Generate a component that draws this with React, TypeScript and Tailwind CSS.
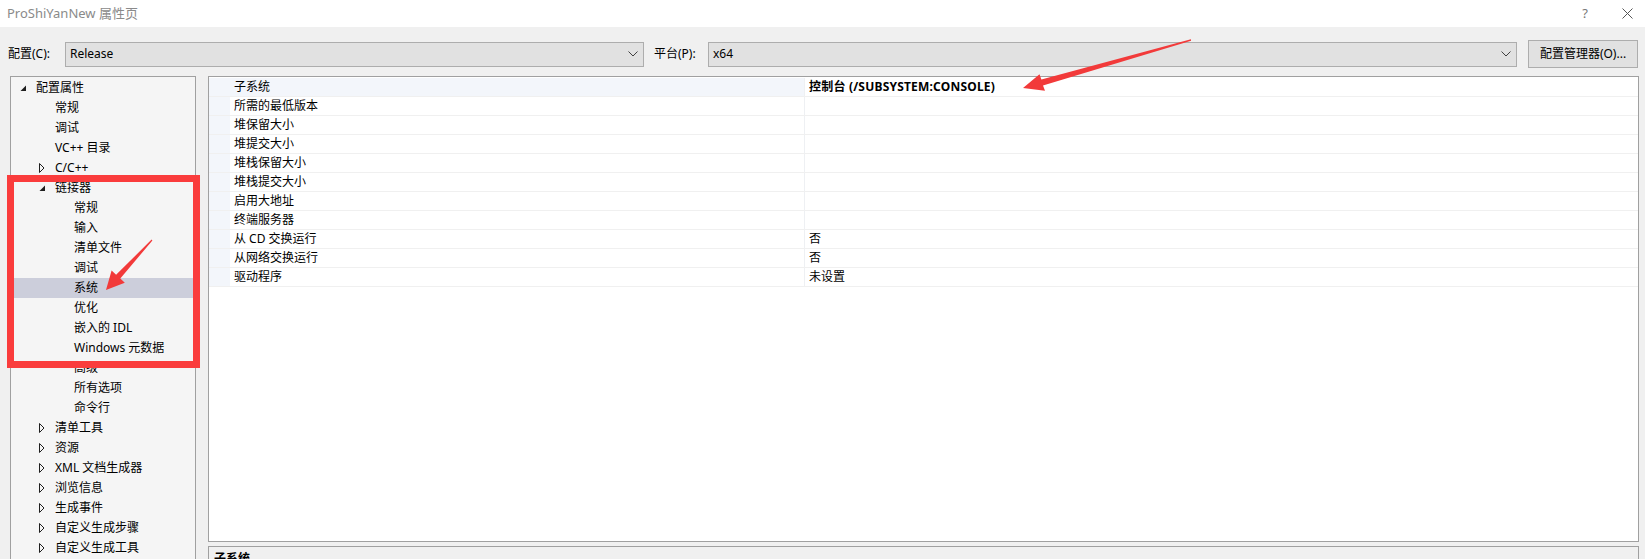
import React from "react";

type TreeItem = {
  label: string;
  level: 0 | 1 | 2;
  icon?: "open" | "closed";
  selected?: boolean;
};

const TREE: TreeItem[] = [
  { label: "配置属性", level: 0, icon: "open" },
  { label: "常规", level: 1 },
  { label: "调试", level: 1 },
  { label: "VC++ 目录", level: 1 },
  { label: "C/C++", level: 1, icon: "closed" },
  { label: "链接器", level: 1, icon: "open" },
  { label: "常规", level: 2 },
  { label: "输入", level: 2 },
  { label: "清单文件", level: 2 },
  { label: "调试", level: 2 },
  { label: "系统", level: 2, selected: true },
  { label: "优化", level: 2 },
  { label: "嵌入的 IDL", level: 2 },
  { label: "Windows 元数据", level: 2 },
  { label: "高级", level: 2 },
  { label: "所有选项", level: 2 },
  { label: "命令行", level: 2 },
  { label: "清单工具", level: 1, icon: "closed" },
  { label: "资源", level: 1, icon: "closed" },
  { label: "XML 文档生成器", level: 1, icon: "closed" },
  { label: "浏览信息", level: 1, icon: "closed" },
  { label: "生成事件", level: 1, icon: "closed" },
  { label: "自定义生成步骤", level: 1, icon: "closed" },
  { label: "自定义生成工具", level: 1, icon: "closed" },
];

const LEVEL_PAD: Record<number, string> = {
  0: "pl-[9px]",
  1: "pl-[28px]",
  2: "pl-[47px]",
};

const PROPS: Array<{ name: string; value: string; bold?: boolean; active?: boolean }> = [
  { name: "子系统", value: "控制台 (/SUBSYSTEM:CONSOLE)", bold: true, active: true },
  { name: "所需的最低版本", value: "" },
  { name: "堆保留大小", value: "" },
  { name: "堆提交大小", value: "" },
  { name: "堆栈保留大小", value: "" },
  { name: "堆栈提交大小", value: "" },
  { name: "启用大地址", value: "" },
  { name: "终端服务器", value: "" },
  { name: "从 CD 交换运行", value: "否" },
  { name: "从网络交换运行", value: "否" },
  { name: "驱动程序", value: "未设置" },
];

function Chevron() {
  return (
    <svg width="10" height="6" viewBox="0 0 10 6" className="shrink-0">
      <polyline points="0.5,0.5 5,5 9.5,0.5" fill="none" stroke="#404040" strokeWidth="1" />
    </svg>
  );
}

function Combo({ value, className }: { value: string; className: string }) {
  return (
    <div
      className={`flex h-[25px] items-center justify-between border border-[#adadad] bg-[#e1e1e1] pl-[4px] pr-[5px] ${className}`}
    >
      <span>{value}</span>
      <Chevron />
    </div>
  );
}

function TreeIcon({ kind }: { kind?: "open" | "closed" }) {
  if (kind === "open") {
    return (
      <svg width="7" height="7" viewBox="0 0 7 7">
        <polygon points="6,0.5 6,6 0.5,6" fill="#1e1e1e" />
      </svg>
    );
  }
  if (kind === "closed") {
    return (
      <svg width="6" height="10" viewBox="0 0 6 10">
        <polygon points="0.5,0.5 5,5 0.5,9.5" fill="none" stroke="#1e1e1e" strokeWidth="1" />
      </svg>
    );
  }
  return null;
}

export default function App() {
  return (
    <div
      className="relative h-[559px] w-[1645px] overflow-hidden bg-[#f0f0f0] text-[12px] text-black"
      style={{ fontFamily: '"Noto Sans", "Noto Sans CJK SC", sans-serif' }}
    >
      {/* title bar */}
      <div className="flex h-[27px] items-center justify-between bg-white pl-[7px] pr-[12px]">
        <span className="text-[13px] text-[#8a8a8a]">ProShiYanNew 属性页</span>
        <div className="flex items-center gap-[34px]">
          <span className="text-[13px] text-[#777]">?</span>
          <svg width="11" height="11" viewBox="0 0 11 11">
            <line x1="0.5" y1="0.5" x2="10.5" y2="10.5" stroke="#555" strokeWidth="1" />
            <line x1="10.5" y1="0.5" x2="0.5" y2="10.5" stroke="#555" strokeWidth="1" />
          </svg>
        </div>
      </div>

      {/* configuration row */}
      <div className="flex h-[49px] items-center pl-[8px] pt-[5px]">
        <span className="w-[57px]">配置(C):</span>
        <Combo value="Release" className="w-[579px]" />
        <span className="ml-[10px] w-[54px]">平台(P):</span>
        <Combo value="x64" className="w-[809px]" />
        <button
          type="button"
          className="ml-[11px] flex h-[28px] w-[110px] items-center justify-center border border-[#adadad] bg-[#e1e1e1]"
        >
          配置管理器(O)...
        </button>
      </div>

      {/* main area */}
      <div className="flex pl-[10px]">
        <div className="h-[500px] w-[186px] border border-[#a0a0a0] bg-[#f5f5f5] pt-[1px]">
          {TREE.map((item, i) => (
            <div
              key={i}
              className={`flex h-[20px] items-center ${LEVEL_PAD[item.level]} ${
                item.selected ? "bg-[#cccedb]" : ""
              }`}
            >
              <span className="flex w-[16px] items-center">
                <TreeIcon kind={item.icon} />
              </span>
              <span className="whitespace-nowrap">{item.label}</span>
            </div>
          ))}
        </div>

        <div className="ml-[12px] flex w-[1431px] flex-col">
          <div className="h-[466px] border border-[#a0a0a0] bg-white pt-[1px]">
            {PROPS.map((p, i) => (
              <div key={i} className="flex h-[19px] border-b border-[#f0f0f0]">
                <div className="w-[21px] shrink-0 bg-[#f3f6fb]" />
                <div
                  className={`flex w-[575px] shrink-0 items-center border-r border-[#eef0f3] pl-[4px] ${
                    p.active ? "bg-[#f3f6fb]" : ""
                  }`}
                >
                  {p.name}
                </div>
                <div
                  className={`flex flex-1 items-center pl-[4px] ${
                    p.bold ? "font-bold tracking-[0.2px]" : ""
                  }`}
                >
                  {p.value}
                </div>
              </div>
            ))}
          </div>
          <div className="mt-[4px] h-[60px] border border-[#a0a0a0] bg-[#f0f0f0] pl-[5px] pt-[3px]">
            <span className="font-bold">子系统</span>
          </div>
        </div>
      </div>

      {/* annotation: red frame */}
      <div className="absolute left-[7px] top-[175px] h-[193px] w-[193px] border-[7px] border-[#fa3c3c]" />

      {/* annotation: arrows */}
      <svg className="pointer-events-none absolute left-0 top-0" width="1645" height="559">
        <polygon
          points="1190.9,39.3 1041.4,79.6 1039.5,74.2 1023,88 1045,90.8 1043,85.4 1191.1,40.7"
          fill="#f23a3a"
        />
        <polygon
          points="152.4,240.4 120.3,278.6 124.8,282.8 106,290 111.6,270.6 116.1,274.8 151.6,239.6"
          fill="#f23a3a"
        />
      </svg>
    </div>
  );
}
